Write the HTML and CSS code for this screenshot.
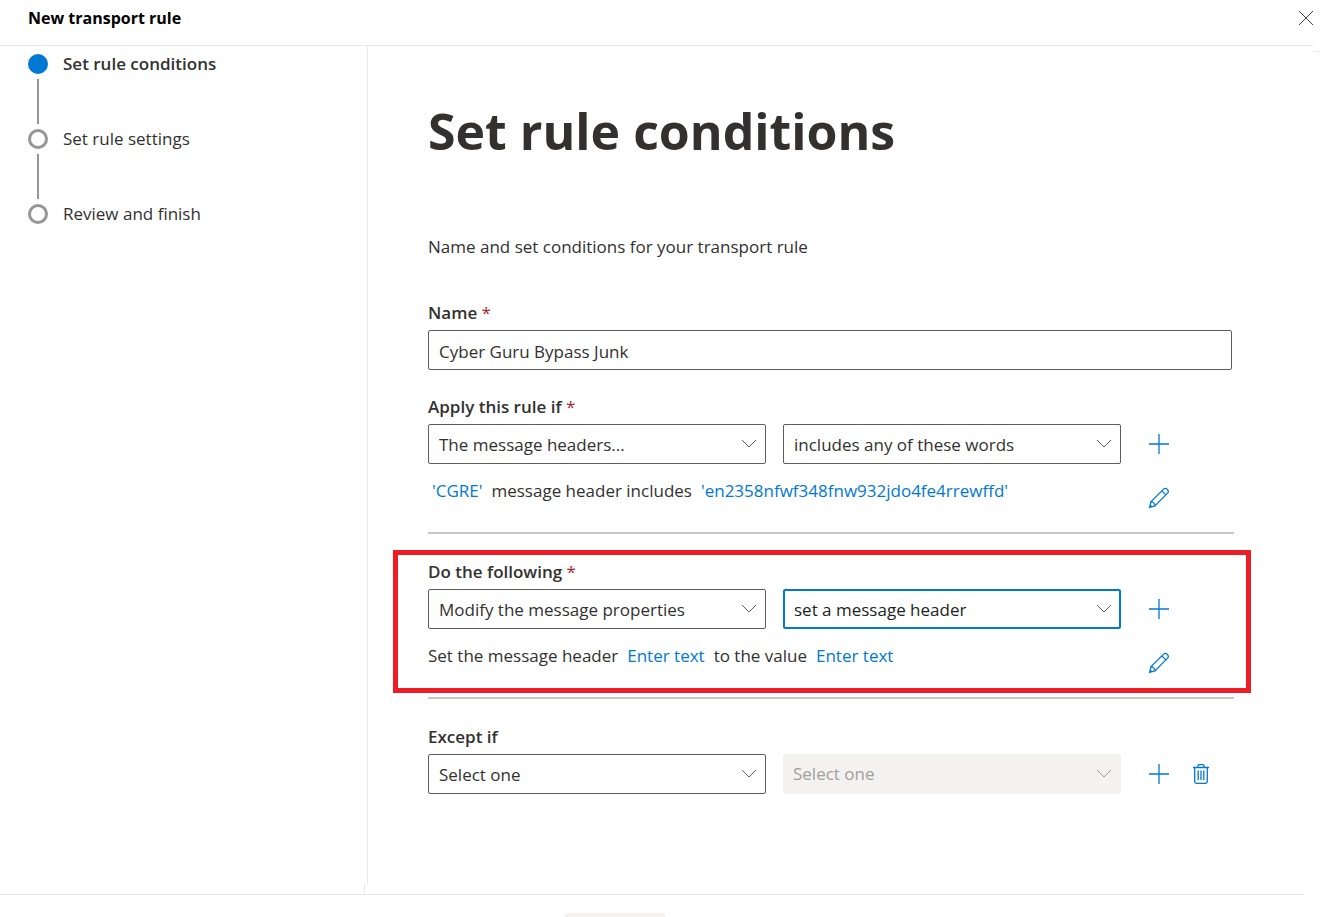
FILE: index.html
```html
<!DOCTYPE html>
<html lang="en">
<head>
    <meta charset="UTF-8">
    <meta name="viewport" content="width=device-width, initial-scale=1.0">
    <title>New transport rule</title>
    <link rel="stylesheet" href="styles.css">
</head>
<body>
    <header class="topbar">
        <h2 class="topbar-title">New transport rule</h2>
        <button type="button" class="close" aria-label="Close">
            <svg width="15" height="16" viewBox="0 0 15 16"><path d="M1 1l14 14M15 1L1 15"/></svg>
        </button>
    </header>

    <div class="wizard">
        <nav class="sidebar">
            <ol class="steps">
                <li class="step current"><span class="dot"></span>Set rule conditions</li>
                <li class="step"><span class="dot"></span>Set rule settings</li>
                <li class="step"><span class="dot"></span>Review and finish</li>
            </ol>
        </nav>

        <main class="content">
            <h1>Set rule conditions</h1>
            <p class="intro">Name and set conditions for your transport rule</p>

            <form>
                <div class="name-field">
                    <label class="label" for="name">Name <span class="required">*</span></label>
                    <input class="control" type="text" id="name" value="Cyber Guru Bypass Junk">
                </div>

                <section class="group">
                    <label class="label" for="condition">Apply this rule if <span class="required">*</span></label>
                    <div class="row">
                        <div class="dropdown">
                            <select class="control" id="condition"><option>The message headers...</option></select>
                            <svg class="chevron" width="16" height="10" viewBox="0 0 16 10"><path d="M1 1l7 7 7-7"/></svg>
                        </div>
                        <div class="dropdown">
                            <select class="control" aria-label="Condition type"><option>includes any of these words</option></select>
                            <svg class="chevron" width="16" height="10" viewBox="0 0 16 10"><path d="M1 1l7 7 7-7"/></svg>
                        </div>
                        <div class="actions">
                            <button type="button" class="icon-button" aria-label="Add condition">
                                <svg width="20" height="20" viewBox="0 0 20 20"><path d="M10 0v20M0 10h20"/></svg>
                            </button>
                        </div>
                    </div>
                    <div class="row summary">
                        <p class="summary-text"><a class="value first" href="#">'CGRE'</a>message header includes<a class="value" href="#">'en2358nfwf348fnw932jdo4fe4rrewffd'</a></p>
                        <div class="actions">
                            <button type="button" class="icon-button" aria-label="Edit condition">
                                <svg width="22" height="22" viewBox="0 0 22 22"><path d="M1.6 20.4l1.3-5.6L15.6 2.1a2.4 2.4 0 0 1 3.4 0l.6.6a2.4 2.4 0 0 1 0 3.4L6.9 18.9zM13.8 3.9l4 4M2.9 14.8c2.4 0 4 1.6 4 4.1M2.2 18.2l1.6 1.6"/></svg>
                            </button>
                        </div>
                    </div>
                </section>

                <section class="group highlighted">
                    <label class="label" for="action">Do the following <span class="required">*</span></label>
                    <div class="row">
                        <div class="dropdown">
                            <select class="control" id="action"><option>Modify the message properties</option></select>
                            <svg class="chevron" width="16" height="10" viewBox="0 0 16 10"><path d="M1 1l7 7 7-7"/></svg>
                        </div>
                        <div class="dropdown">
                            <select class="control active" aria-label="Action type"><option>set a message header</option></select>
                            <svg class="chevron" width="16" height="10" viewBox="0 0 16 10"><path d="M1 1l7 7 7-7"/></svg>
                        </div>
                        <div class="actions">
                            <button type="button" class="icon-button" aria-label="Add action">
                                <svg width="20" height="20" viewBox="0 0 20 20"><path d="M10 0v20M0 10h20"/></svg>
                            </button>
                        </div>
                    </div>
                    <div class="row summary">
                        <p class="summary-text">Set the message header<a class="value" href="#">Enter text</a>to the value<a class="value" href="#">Enter text</a></p>
                        <div class="actions">
                            <button type="button" class="icon-button" aria-label="Edit action">
                                <svg width="22" height="22" viewBox="0 0 22 22"><path d="M1.6 20.4l1.3-5.6L15.6 2.1a2.4 2.4 0 0 1 3.4 0l.6.6a2.4 2.4 0 0 1 0 3.4L6.9 18.9zM13.8 3.9l4 4M2.9 14.8c2.4 0 4 1.6 4 4.1M2.2 18.2l1.6 1.6"/></svg>
                            </button>
                        </div>
                    </div>
                </section>

                <section class="group">
                    <label class="label" for="exception">Except if</label>
                    <div class="row">
                        <div class="dropdown">
                            <select class="control" id="exception"><option>Select one</option></select>
                            <svg class="chevron" width="16" height="10" viewBox="0 0 16 10"><path d="M1 1l7 7 7-7"/></svg>
                        </div>
                        <div class="dropdown">
                            <select class="control" aria-label="Exception type" disabled><option>Select one</option></select>
                            <svg class="chevron muted" width="16" height="10" viewBox="0 0 16 10"><path d="M1 1l7 7 7-7"/></svg>
                        </div>
                        <div class="actions">
                            <button type="button" class="icon-button" aria-label="Add exception">
                                <svg width="20" height="20" viewBox="0 0 20 20"><path d="M10 0v20M0 10h20"/></svg>
                            </button>
                            <button type="button" class="icon-button" aria-label="Remove exception">
                                <svg width="18" height="20" viewBox="0 0 18 20"><path d="M1 3.5h16M6 3.5V1.7q0-1 1-1h4q1 0 1 1v1.8M2.7 3.5v14q0 1.800 1.800 1.800h9q1.800 0 1.800-1.800v-14M6.200 6.500v9.500M9 6.500v9.500M11.800 6.500v9.500"/></svg>
                            </button>
                        </div>
                    </div>
                </section>
            </form>
        </main>
    </div>

    <div class="sidebar-end"></div>
    <footer class="footer">
        <button type="button" class="footer-button" aria-label="Next" disabled></button>
    </footer>
</body>
</html>
```
FILE: styles.css
```css
* {
    box-sizing: border-box;
}
body {
    display: flex;
    flex-direction: column;
    min-height: 100vh;
    margin: 0;
    background-color: #fff;
    color: #323130;
    font-family: "Segoe UI", "Open Sans", "Noto Sans", sans-serif;
    font-size: 17px;
    line-height: 24px;
}
svg {
    display: block;
    fill: none;
    stroke: currentColor;
}
button {
    display: flex;
    align-items: center;
    justify-content: center;
    padding: 0;
    border: 0;
    background: none;
}

/* Header */
.topbar {
    position: relative;
    display: flex;
    align-items: center;
    justify-content: space-between;
    height: 46px;
    margin-right: 7px;
    padding: 0 0 9px 28px;
    border-bottom: 1px solid #e9e9e9;
}
.topbar::after {
    content: "";
    position: absolute;
    left: 100%;
    top: 51px;
    width: 7px;
    height: 1px;
    background-color: #e9e9e9;
}
.topbar-title {
    margin: 0;
    color: #000;
    font-size: 16px;
    font-weight: 700;
}
.close {
    color: #444;
}

/* Steps */
.wizard {
    display: flex;
    flex: 1;
}
.sidebar {
    flex: none;
    width: 368px;
    border-right: 1px solid #e9e9e9;
}
.steps {
    margin: 0;
    padding: 6px 0 0 28px;
    list-style: none;
}
.step {
    position: relative;
    display: flex;
    align-items: center;
    gap: 15px;
    height: 24px;
    margin-bottom: 51px;
}
.step.current {
    font-weight: 600;
}
.dot {
    width: 20px;
    height: 20px;
    border: 3px solid #979593;
    border-radius: 50%;
}
.current .dot {
    border-color: #0078d4;
    background-color: #0078d4;
}
.step:not(:last-child)::after {
    content: "";
    position: absolute;
    left: 9px;
    top: 27px;
    width: 2px;
    height: 45px;
    background-color: #979593;
}

/* Form */
.content {
    flex: 1;
    padding: 48px 86px 0 60px;
}
h1 {
    margin: 0 0 67px;
    font-size: 50px;
    line-height: 74px;
    font-weight: 700;
}
.intro {
    margin: 0 0 42px;
}
.name-field {
    margin: 0 2px 25px 0;
}
.label {
    display: block;
    margin-bottom: 5px;
    font-weight: 600;
}
.required {
    color: #a4262c;
    font-weight: 400;
}
.control {
    display: block;
    width: 100%;
    height: 40px;
    padding: 2px 10px 0;
    border: 1px solid #605e5c;
    border-radius: 2px;
    background-color: #fff;
    color: #323130;
    font: inherit;
    appearance: none;
}
.control.active {
    padding: 2px 9px 0;
    border: 2px solid #0078d4;
    color: #201f1e;
}
.control:disabled {
    padding: 0 9px;
    border-color: #f3f2f1;
    background-color: #f3f2f1;
    color: #a19f9d;
    opacity: 1;
}
.row {
    display: grid;
    grid-template-columns: 1fr 1fr 96px;
    gap: 17px;
    align-items: center;
}
.dropdown {
    position: relative;
}
.chevron {
    position: absolute;
    right: 9px;
    top: 15px;
    color: #605e5c;
    pointer-events: none;
}
.chevron.muted {
    color: #a19f9d;
}
.actions {
    display: flex;
}
.icon-button {
    width: 42px;
    height: 32px;
    color: #0078d4;
}
.icon-button svg {
    stroke-width: 1.3;
}
.group {
    position: relative;
    margin-bottom: 26px;
}
.summary {
    height: 70px;
    border-bottom: 2px solid #c8c8c8;
}
.summary-text {
    grid-column: span 2;
    margin: 0 0 14px;
}
.value {
    margin: 0 9px;
    color: #0078d4;
    text-decoration: none;
}
.value.first {
    margin-left: 4px;
}
.highlighted::before {
    content: "";
    position: absolute;
    inset: -10px -17px 6px -35px;
    border: 5px solid #ee1c25;
    pointer-events: none;
}

/* Footer */
.sidebar-end {
    width: 365px;
    height: 10px;
    border-right: 1px solid #e9e9e9;
}
.footer {
    height: 23px;
    margin-right: 15px;
    padding: 18px 0 0 565px;
    border-top: 1px solid #e9e9e9;
    overflow: hidden;
}
.footer-button {
    width: 100px;
    height: 40px;
    border-radius: 2px;
    background-color: #f3f2f1;
}
```
